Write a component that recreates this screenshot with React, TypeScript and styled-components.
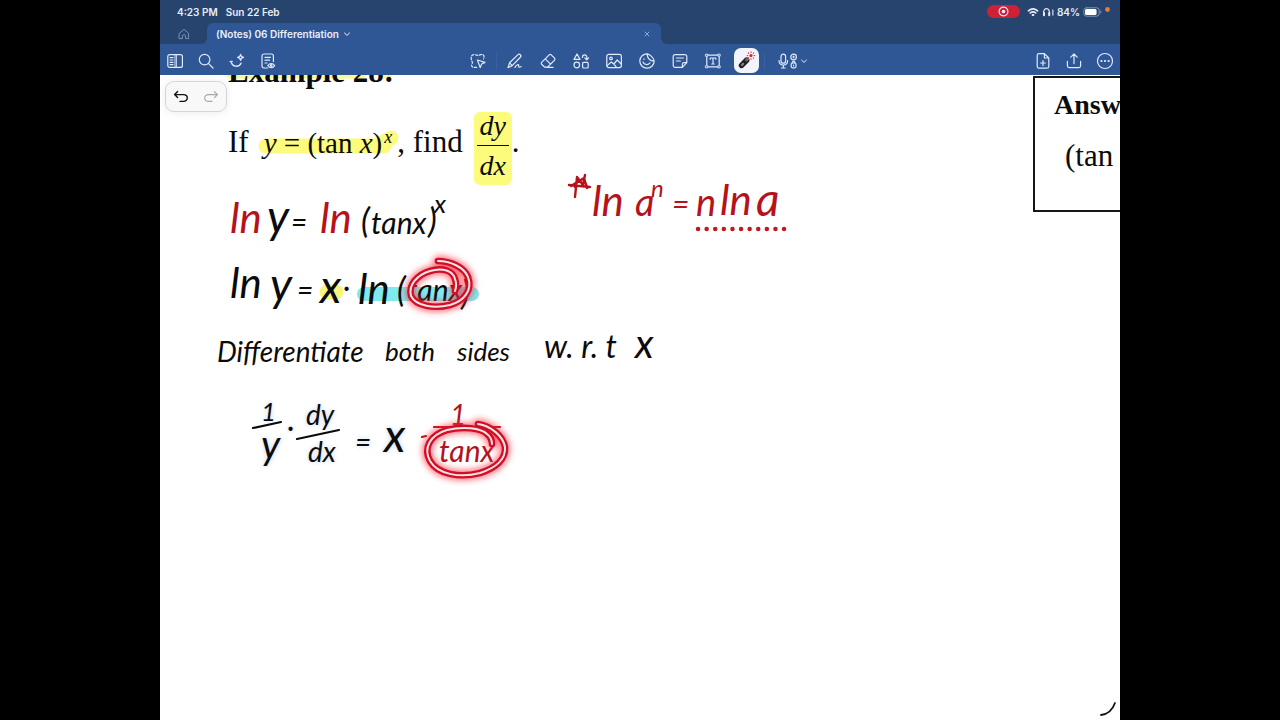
import React from 'react';
import styled, { createGlobalStyle, css } from 'styled-components';

const GlobalStyle = createGlobalStyle`
  * { box-sizing: border-box; }
  body { margin: 0; background: #000; }
  button, input { font: inherit; color: inherit; }
`;

const RED = '#b5121b';
const INK = '#0b0b0b';

const Backdrop = styled.div`
  display: flex;
  justify-content: center;
  min-height: 100vh;
  background: #000;
`;

const Tablet = styled.div`
  display: flex;
  flex-direction: column;
  width: 75%;
  background: #fff;
  overflow: hidden;
  font-family: Inter, 'Liberation Sans', sans-serif;
`;

const StatusBar = styled.header`
  display: flex;
  align-items: center;
  justify-content: space-between;
  height: 23px;
  padding: 0 10px 0 17px;
  background: #27446f;
  color: #e8eef8;
  font-size: 10px;
  font-weight: 600;
`;

const StatusGroup = styled.div<{ $gap: number }>`
  display: flex;
  align-items: center;
  gap: ${(p) => p.$gap}px;
`;

const RecordPill = styled.span`
  display: flex;
  align-items: center;
  justify-content: center;
  width: 33px;
  height: 13px;
  margin-right: 4px;
  border-radius: 7px;
  background: #cf2036;
`;

const TabBar = styled.nav`
  display: flex;
  height: 21px;
  background: #2f5695;
`;

const HomeButton = styled.button`
  display: flex;
  align-items: center;
  justify-content: center;
  width: 47px;
  border: 0;
  border-radius: 0 0 6px 0;
  padding: 0;
  background: #27446f;
  color: #7890b8;
`;

const TabGround = styled.div`
  width: 454px;
  background: #27446f;
`;

const Tab = styled.div`
  display: flex;
  align-items: center;
  height: 21px;
  padding: 0 10px 0 9px;
  border-radius: 6px 6px 0 0;
  background: #2f5695;
  color: #eaf0fa;
  font-size: 10px;
  font-weight: 600;
`;

const TabButton = styled.button<{ $end?: boolean }>`
  display: flex;
  align-items: center;
  gap: 4px;
  margin-left: ${(p) => (p.$end ? 'auto' : '0')};
  padding: 0;
  border: 0;
  background: none;
  white-space: nowrap;
`;

const TabRest = styled.div`
  flex: 1;
  border-radius: 0 0 0 6px;
  background: #27446f;
`;

const Toolbar = styled.div`
  display: grid;
  grid-template-columns: 1fr auto 1fr;
  align-items: center;
  height: 31px;
  padding: 2px 6px 0;
  background: #2f5695;
  color: #dfeafa;
`;

const ToolGroup = styled.div<{ $gap: number; $end?: boolean }>`
  display: flex;
  align-items: center;
  justify-content: ${(p) => (p.$end ? 'flex-end' : 'flex-start')};
  gap: ${(p) => p.$gap}px;
`;

const ToolButton = styled.button<{ $active?: boolean }>`
  display: flex;
  align-items: center;
  justify-content: center;
  flex: none;
  width: ${(p) => (p.$active ? 25 : 18)}px;
  height: 25px;
  margin: ${(p) => (p.$active ? '0 -4px 0 -3px' : '0')};
  padding: 0;
  border: 0;
  border-radius: 7px;
  background: ${(p) => (p.$active ? '#f1f4fa' : 'none')};
`;

const AudioButton = styled(ToolButton)`
  width: 38px;
  gap: 2px;
`;

const Divider = styled.span`
  width: 1px;
  height: 16px;
  margin: 0 -6px;
  background: #3a60a0;
`;

const Sheet = styled.main`
  position: relative;
  display: flex;
  flex: 1;
  align-items: flex-start;
  justify-content: space-between;
  overflow: hidden;
  background: #fff;
  color: #0b0b0b;
  font-family: 'Liberation Serif', serif;
`;

const Layer = styled.svg`
  position: absolute;
  top: 0;
  left: 0;
  pointer-events: none;
`;

const Problem = styled.section`
  position: relative;
  padding-left: 68px;
`;

const Heading = styled.h1`
  margin: -19px 0 0;
  font-size: 31px;
  line-height: 32px;
  white-space: nowrap;
`;

const Statement = styled.div`
  display: flex;
  align-items: flex-start;
  margin-top: 24px;
  font-size: 31px;
  line-height: 36px;
  white-space: nowrap;
`;

const Words = styled.span`
  padding-top: 12px;
`;

const Formula = styled.span`
  padding: 13px 5px 0 15px;
  font-size: 29px;
  sup {
    margin-left: 2px;
    font-size: 18px;
    line-height: 0;
    vertical-align: 10px;
  }
`;

const Fraction = styled.span`
  display: flex;
  flex-direction: column;
  align-items: center;
  width: 38px;
  margin-left: 11px;
  padding-bottom: 5px;
  border-radius: 6px;
  background: #fdfb7c;
  font-size: 28px;
  font-style: italic;
  line-height: 28px;
`;

const FractionBar = styled.span`
  width: 32px;
  height: 1px;
  margin: 5px 0 6px;
  background: #0b0b0b;
`;

const AnswerBox = styled.aside`
  position: relative;
  width: 87px;
  height: 136px;
  margin-top: 1px;
  padding: 9px 0 0 19px;
  border: 2px solid #161616;
  border-right: 0;
  overflow: hidden;
  font-size: 29px;
  line-height: 36px;
  white-space: nowrap;
  h2 {
    margin: 0 0 15px;
    font-size: 28px;
  }
  p {
    margin: 0 0 0 11px;
    font-size: 31px;
  }
`;

const History = styled.div`
  position: absolute;
  top: 6px;
  left: 5px;
  display: flex;
  align-items: center;
  justify-content: space-around;
  width: 62px;
  height: 31px;
  border: 1px solid #d6d6d6;
  border-radius: 9px;
  background: #f8f8f8;
  box-shadow: 0 1px 8px rgba(0, 0, 0, 0.08);
`;

const HistoryButton = styled.button<{ $off?: boolean }>`
  display: flex;
  padding: 0;
  border: 0;
  background: none;
  color: ${(p) => (p.$off ? '#a9a9a9' : '#111')};
`;

type InkProps = { $x: number; $y: number; $size: number; $red?: boolean; $halo?: boolean };

const InkWord = styled.span<InkProps>`
  position: absolute;
  left: ${(p) => p.$x}px;
  top: ${(p) => p.$y}px;
  color: ${(p) => (p.$red ? RED : INK)};
  font-family: Lato, 'Liberation Sans', sans-serif;
  font-style: italic;
  font-size: ${(p) => p.$size}px;
  line-height: 1;
  white-space: pre;
  ${(p) =>
    p.$halo &&
    css`
      text-shadow: 0 0 4px #d5e2f2, 0 0 6px #dfe9f6;
    `}
`;

type Word = { t: string; x: number; y: number; s: number; red?: boolean; halo?: boolean };

const words: Word[] = [
  { t: 'ln', x: 70, y: 121, s: 42, red: true },
  { t: 'y', x: 107, y: 118, s: 46 },
  { t: '=', x: 131, y: 132, s: 28 },
  { t: 'ln', x: 160, y: 121, s: 42, red: true },
  { t: '(', x: 201, y: 128, s: 34 },
  { t: 'tanx', x: 211, y: 132, s: 30 },
  { t: ')', x: 268, y: 128, s: 34 },
  { t: 'x', x: 274, y: 115, s: 26 },

  { t: 'ln', x: 70, y: 186, s: 42 },
  { t: 'y', x: 110, y: 186, s: 46 },
  { t: '=', x: 137, y: 200, s: 28 },
  { t: 'x', x: 160, y: 188, s: 46 },
  { t: '·', x: 183, y: 198, s: 28 },
  { t: 'ln', x: 198, y: 192, s: 42 },
  { t: '(', x: 237, y: 197, s: 34 },
  { t: 'tanx', x: 247, y: 199, s: 30 },
  { t: ')', x: 301, y: 200, s: 34 },

  { t: 'Differentiate', x: 57, y: 262, s: 28 },
  { t: 'both', x: 225, y: 263, s: 26 },
  { t: 'sides', x: 297, y: 263, s: 26 },
  { t: 'w. r. t', x: 384, y: 255, s: 32 },
  { t: 'x', x: 475, y: 248, s: 40 },

  { t: '1', x: 101, y: 323, s: 26, halo: true },
  { t: 'y', x: 101, y: 349, s: 40, halo: true },
  { t: '·', x: 127, y: 338, s: 28, halo: true },
  { t: 'dy', x: 146, y: 325, s: 28, halo: true },
  { t: 'dx', x: 148, y: 362, s: 28, halo: true },
  { t: '=', x: 195, y: 352, s: 28, halo: true },
  { t: 'x', x: 224, y: 337, s: 46, halo: true },
  { t: '1', x: 290, y: 325, s: 28, red: true },
  { t: 'tanx', x: 279, y: 360, s: 30, red: true },

  { t: 'ln', x: 432, y: 104, s: 42, red: true },
  { t: 'a', x: 475, y: 107, s: 38, red: true },
  { t: 'n', x: 491, y: 101, s: 24, red: true },
  { t: '=', x: 512, y: 113, s: 30, red: true },
  { t: 'n', x: 536, y: 107, s: 38, red: true },
  { t: 'ln', x: 560, y: 103, s: 42, red: true },
  { t: 'a', x: 596, y: 101, s: 46, red: true },
];

const laserRings = [
  'M438 261C450 261 464 267 468 277C473 290 464 301 450 305C434 309 416 306 411 296C408 285 417 275 430 271C443 267 453 271 455 279C457 284 456 288 455 291',
  'M478 424C491 426 503 436 505 447C506 459 496 468 480 473C461 478 438 475 430 461C423 448 430 435 447 430C463 426 481 428 487 434C491 437 492 440 492 444',
];

const Icon = ({ w = 18, h = 18, sw = 1.2, children }: { w?: number; h?: number; sw?: number; children: React.ReactNode }) => (
  <svg width={w} height={h} viewBox={`0 0 ${w} ${h}`} fill="none" stroke="currentColor" strokeWidth={sw} strokeLinecap="round" strokeLinejoin="round" aria-hidden="true">
    {children}
  </svg>
);

const Chevron = () => (
  <Icon w={8} h={8} sw={1}>
    <path d="M1.5 3L4 5.4L6.5 3" />
  </Icon>
);

const leftTools = [
  { label: 'Sidebar', art: <><rect x="1.8" y="2.6" width="14.6" height="12.8" rx="2" /><path d="M9 2.6V15.4M10.4 2.6V15.4" strokeWidth="0.9" /><path d="M4 5.6H7M4 8H7M4 10.4H7M4 12.6H7" /></> },
  { label: 'Search', art: <><circle cx="7.6" cy="7.6" r="5.3" /><path d="M11.6 11.6L16 16" /></> },
  { label: 'Assistant', art: <><path d="M2.2 9.6L4.2 9.4M3.2 9.6C4 15.2 11.2 15.6 13 11.2" strokeWidth="1.4" /><path d="M12.6 2.4C12.9 4.5 13.5 5.1 15.6 5.4C13.5 5.7 12.9 6.3 12.6 8.4C12.3 6.3 11.7 5.7 9.6 5.4C11.7 5.1 12.3 4.5 12.6 2.4Z" /></> },
  { label: 'Outline', art: <><path d="M8.6 16H5A2 2 0 0 1 3 14V4A2 2 0 0 1 5 2H12.4A2 2 0 0 1 14.4 4V9.4M6 5.4H11.4M6 8.2H10.6M6 11H8" /><path d="M8.8 13.6C10.6 10.8 14 10.8 15.6 13.6C14 16.2 10.6 16.2 8.8 13.6Z" /><circle cx="12.2" cy="13.5" r="0.8" /></> },
];

const midTools = [
  { label: 'Pen', art: <><path d="M2 15.6L3.6 10.8L12 2.6C13.6 1.4 15.8 3.4 14.6 5L6.2 13.6L2 15.6ZM3.6 10.8L6.2 13.6" /><path d="M9 15.4C10.4 12.6 13.4 11.6 12.6 13.8C12 15.6 13.8 15.4 15.2 14.6" /></> },
  { label: 'Eraser', art: <><path d="M2.6 10.4L10.2 2.8Q11.2 1.9 12.2 2.8L15.6 6.2Q16.4 7.2 15.6 8.2L8.6 15.2H5.8L2.6 12.2Q1.8 11.3 2.6 10.4ZM6.2 6.8L11.6 12.2M8 15.4H14" /></> },
  { label: 'Shapes', art: <><path d="M5 2L8 7.4H2Z" /><circle cx="4.8" cy="13" r="2.8" /><rect x="10.6" y="10.4" width="5.6" height="5.6" rx="1" /><path d="M10.4 5.4C10.4 2.2 14.8 2 14.8 5.4V7.4M12.8 5.8L14.8 7.8L16.6 5.8" /></> },
  { label: 'Image', art: <><rect x="1.8" y="2.4" width="14.6" height="13.2" rx="2" /><circle cx="6" cy="6.4" r="1.3" /><path d="M2 13.6L6.4 10L8.8 12L12.2 8L16.2 12M8.8 12L11 14.6" /></> },
  { label: 'Sticker', art: <path d="M9.4 1.8A7.2 7.2 0 1 0 16.2 8.8C13.4 9.6 8.8 6.8 9.4 1.8ZM9.4 1.8C12 2.6 15.4 5.6 16.2 8.8M5 10C6.2 13.2 10.6 13.4 12 10.8M6 6.8V7.4" /> },
  { label: 'Note', art: <path d="M4 2.6H14A1.8 1.8 0 0 1 15.8 4.4V10.6L11.4 15.4H4A1.8 1.8 0 0 1 2.2 13.6V4.4A1.8 1.8 0 0 1 4 2.6ZM15.6 10.6H13A1.6 1.6 0 0 0 11.4 12.2V15.2M5.4 6H12.4M5.4 9H9.4" /> },
  { label: 'Text box', art: <><rect x="2.8" y="3.2" width="12.4" height="11.6" /><path d="M6.2 7.2V6H11.8V7.2M9 6V12M7.8 12H10.2" /><path d="M1.8 2.2H3.8V4.2H1.8ZM14.2 2.2H16.2V4.2H14.2ZM1.8 13.8H3.8V15.8H1.8ZM14.2 13.8H16.2V15.8H14.2Z" fill="#2f5695" strokeWidth="0.9" /></> },
];

const rightTools = [
  { label: 'Add page', art: <path d="M10.4 1.6H5A1.8 1.8 0 0 0 3.2 3.4V14.4A1.8 1.8 0 0 0 5 16.2H13A1.8 1.8 0 0 0 14.8 14.4V6ZM10.4 1.8V6H14.6M9 8.6V13.4M6.6 11H11.4" /> },
  { label: 'Share', art: <path d="M2.4 9.4V13.8A1.8 1.8 0 0 0 4.2 15.6H13.8A1.8 1.8 0 0 0 15.6 13.8V9.4M9 11.6V2.2M5.8 5.2L9 2L12.2 5.2" /> },
  { label: 'More', art: <><circle cx="9" cy="9" r="7.5" /><path d="M5.4 9H5.5M9 9H9.1M12.6 9H12.7" strokeWidth="2.2" /></> },
];

export default function App() {
  return (
    <>
      <GlobalStyle />
      <Backdrop>
        <Tablet>
          <StatusBar>
            <StatusGroup $gap={8}>
              <span>4:23 PM</span>
              <span>Sun 22 Feb</span>
            </StatusGroup>
            <StatusGroup $gap={3}>
              <RecordPill>
                <Icon w={11} h={11}>
                  <circle cx="5.5" cy="5.5" r="4.4" />
                  <circle cx="5.5" cy="5.5" r="1.8" fill="currentColor" stroke="none" />
                </Icon>
              </RecordPill>
              <Icon w={12} h={10} sw={1.6}>
                <path d="M1.4 3.8Q6 -0.2 10.6 3.8M3.2 6Q6 3.6 8.8 6" />
                <path d="M5.6 8H6.4" strokeWidth="2" />
              </Icon>
              <Icon w={12} h={10} sw={1.2}>
                <path d="M1.8 7.6C-0.2 0 9 -0.6 7.4 7.6" />
                <path d="M2 6V8.2M7.2 6V8.2" strokeWidth="2" />
                <path d="M10.8 3V8" strokeWidth="1.6" stroke="#a9b7cf" />
              </Icon>
              <span>84%</span>
              <Icon w={19} h={10} sw={1}>
                <rect x="0.8" y="0.8" width="15.4" height="8.4" rx="2.6" stroke="#8195b8" />
                <rect x="2" y="2" width="11.6" height="6" rx="1.6" fill="#fff" stroke="none" />
                <path d="M17.8 4V6" stroke="#8195b8" />
              </Icon>
              <Icon w={5} h={14}>
                <circle cx="2.5" cy="4.5" r="2.4" fill="#de7f3c" stroke="none" />
              </Icon>
            </StatusGroup>
          </StatusBar>

          <TabBar aria-label="Documents">
            <HomeButton aria-label="Home">
              <Icon w={12} h={12} sw={1}>
                <path d="M1.4 5.2L6 1.4L10.6 5.2V10.6H7.6V7.4Q6 5.8 4.4 7.4V10.6H1.4Z" />
              </Icon>
            </HomeButton>
            <TabGround>
              <Tab>
                <TabButton>
                  (Notes) 06 Differentiation
                  <Chevron />
                </TabButton>
                <TabButton $end aria-label="Close tab">
                  <Icon w={8} h={8} sw={1}>
                    <path d="M2 2L6 6M6 2L2 6" stroke="#8fa8d4" />
                  </Icon>
                </TabButton>
              </Tab>
            </TabGround>
            <TabRest />
          </TabBar>

          <Toolbar>
            <ToolGroup $gap={13}>
              {leftTools.map((t) => (
                <ToolButton key={t.label} aria-label={t.label}>
                  <Icon>{t.art}</Icon>
                </ToolButton>
              ))}
            </ToolGroup>
            <ToolGroup $gap={15}>
              <ToolButton aria-label="Lasso">
                <Icon>
                  <path d="M7.6 15.4H5.4Q2 15.4 2.8 12.4Q4 10.6 2.8 9Q1.6 6.4 2.6 4Q3.6 2 6.4 2.8Q9 4 11.6 2.6Q15.4 2 15 5.4L14.6 7" strokeDasharray="2.4 1.6" />
                  <path d="M8.4 8L16 10.4L12.6 12L11.2 15.6Z" />
                </Icon>
              </ToolButton>
              <Divider />
              {midTools.map((t) => (
                <ToolButton key={t.label} aria-label={t.label}>
                  <Icon>{t.art}</Icon>
                </ToolButton>
              ))}
              <ToolButton $active aria-label="Laser pointer">
                <Icon w={20} h={20}>
                  <path d="M5.6 14.4L10.6 9.2" stroke="#222" strokeWidth="5.6" />
                  <path d="M6 14L7.2 12.8" stroke="#8a8a8a" strokeWidth="2" />
                  <path d="M10.6 9L11.8 7.8" stroke="#6a6a6a" strokeWidth="3" />
                  <circle cx="15" cy="4.6" r="1.6" fill="#d22233" stroke="none" />
                  <path d="M15 1.4V0.9M15 8.3V7.8M11.8 4.6H11.3M18.7 4.6H18.2M12.7 2.3L12.4 2M17.6 7.2L17.3 6.9M17.3 2.3L17.6 2M12.4 7.2L12.7 6.9" stroke="#d84452" />
                </Icon>
              </ToolButton>
              <Divider />
              <AudioButton aria-label="Record audio">
                <Icon w={20}>
                  <rect x="3" y="2.2" width="4.6" height="9" rx="2.3" />
                  <path d="M1 8.6C1 14.6 9.6 14.6 9.6 8.6M5.3 13.2V16M3.4 16H7.2" />
                  <circle cx="15.6" cy="5" r="2.8" />
                  <path d="M14.6 5H16.6M15.6 4V6" strokeWidth="0.9" />
                  <rect x="13.2" y="11" width="4.8" height="4.8" rx="1.2" />
                  <path d="M14.2 11C14.2 8.8 17 8.8 17 11M15.6 13V13.8" />
                </Icon>
                <Chevron />
              </AudioButton>
            </ToolGroup>
            <ToolGroup $gap={13} $end>
              {rightTools.map((t) => (
                <ToolButton key={t.label} aria-label={t.label}>
                  <Icon>{t.art}</Icon>
                </ToolButton>
              ))}
            </ToolGroup>
          </Toolbar>

          <Sheet>
            <Layer width="960" height="645" viewBox="160 75 960 645" fill="none" strokeLinecap="round" aria-hidden="true">
              <path d="M230 75H362M384 75H388" stroke="#fbfa90" strokeWidth="7" />
              <path d="M266 146H384" stroke="#fdfb7c" strokeWidth="15" />
              <path d="M382 143L391 138" stroke="#fdfb7c" strokeWidth="15" />
              <path d="M327 292H336" stroke="#f8f47e" strokeWidth="15" />
              <path d="M364 294H472" stroke="#7ee9ee" strokeWidth="14" />
            </Layer>

            <Problem>
              <Heading>Example 28:</Heading>
              <Statement>
                <Words>If</Words>
                <Formula>
                  <i>y</i> = (tan <i>x</i>)<sup><i>x</i></sup>
                </Formula>
                <Words>, find</Words>
                <Fraction>
                  <span>dy</span>
                  <FractionBar />
                  <span>dx</span>
                </Fraction>
                <Words>.</Words>
              </Statement>
            </Problem>

            <AnswerBox>
              <h2>Answ</h2>
              <p>(tan</p>
            </AnswerBox>

            {words.map((w, i) => (
              <InkWord key={i} $x={w.x} $y={w.y} $size={w.s} $red={w.red} $halo={w.halo}>
                {w.t}
              </InkWord>
            ))}

            <Layer width="960" height="645" viewBox="160 75 960 645" fill="none" strokeLinecap="round" strokeLinejoin="round" aria-hidden="true">
              <defs>
                <filter id="glow" x="-30%" y="-30%" width="160%" height="160%">
                  <feGaussianBlur stdDeviation="3" />
                </filter>
              </defs>
              <path d="M253 428L281 422M297 439L339 430" stroke={INK} strokeWidth="2.2" />
              <path d="M422 437L426 436M434 427H500" stroke={RED} strokeWidth="2.2" />
              <path d="M575 197L577 177L583 185L585 175M569 185L590 187M571 186L584 178L587 188M578 180L575 187" stroke={RED} strokeWidth="2.4" />
              <path d="M698 229H785" stroke="#c4161f" strokeWidth="4.4" strokeDasharray="0.1 8.5" />
              {laserRings.map((d) => (
                <g key={d}>
                  <path d={d} stroke="#ff3040" strokeWidth="10" opacity="0.7" filter="url(#glow)" />
                  <path d={d} stroke="#cf0f28" strokeWidth="6.6" />
                  <path d={d} stroke="#ffe3e6" strokeWidth="2" />
                </g>
              ))}
              <path d="M1101 715Q1111 714 1115 703" stroke="#111" strokeWidth="1.8" />
            </Layer>

            <History>
              <HistoryButton aria-label="Undo">
                <Icon w={16} h={16} sw={1.4}>
                  <path d="M4.6 2.6L1.6 5.6L4.6 8.6M1.8 5.6H10.4C15.6 5.6 15.6 12.4 10.4 12.4H7" />
                </Icon>
              </HistoryButton>
              <HistoryButton $off disabled aria-label="Redo">
                <Icon w={16} h={16} sw={1.2}>
                  <path d="M11.4 2.6L14.4 5.6L11.4 8.6M14.2 5.6H5.6C0.4 5.6 0.4 12.4 5.6 12.4H9" />
                </Icon>
              </HistoryButton>
            </History>
          </Sheet>
        </Tablet>
      </Backdrop>
    </>
  );
}
